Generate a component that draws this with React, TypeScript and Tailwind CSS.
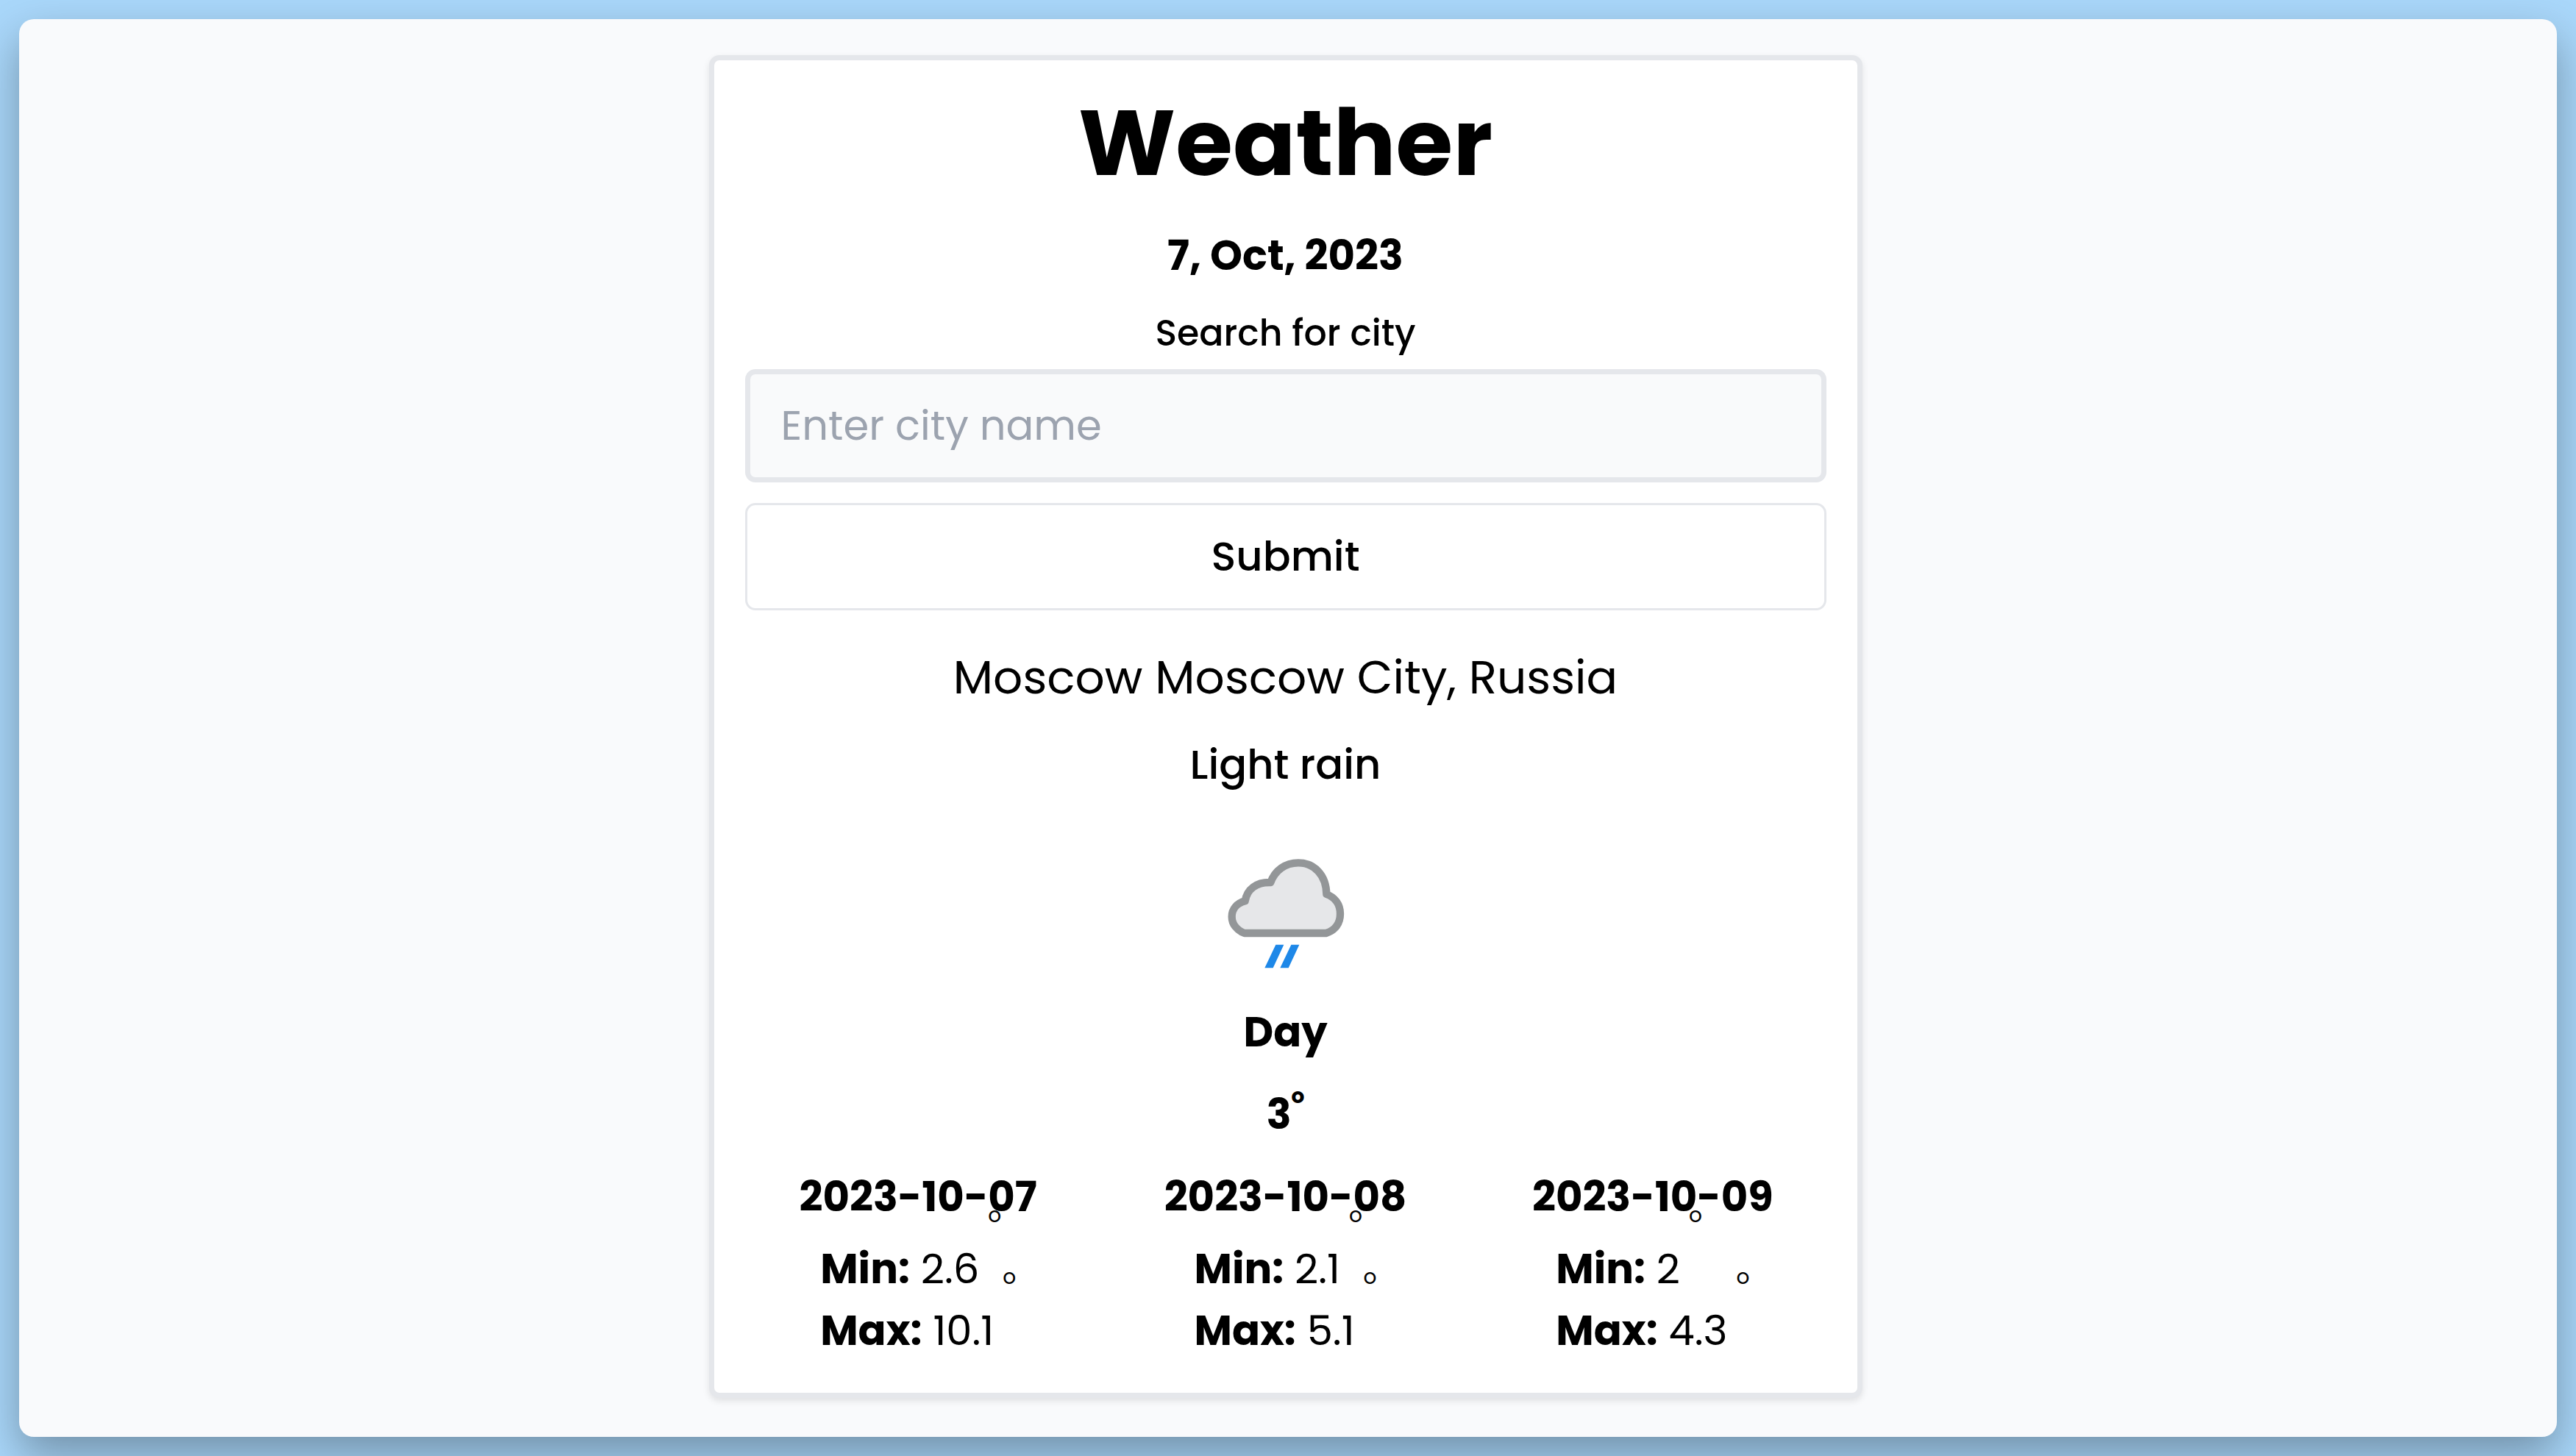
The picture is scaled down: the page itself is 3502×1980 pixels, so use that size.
import React from "react";

type Forecast = { date: string; min: string; max: string };

const forecast: Forecast[] = [
  { date: "2023-10-07", min: "2.6", max: "10.1" },
  { date: "2023-10-08", min: "2.1", max: "5.1" },
  { date: "2023-10-09", min: "2", max: "4.3" },
];

function RainIcon() {
  return (
    <svg className="size-[224px]" viewBox="48 -60 672 672" role="img" aria-label="Light rain">
      <path
        d="M215 417 C185 406 164 380 164 350 C164 318 185 295 218 286 C226 238 264 208 322 210 C340 160 382 130 435 130 C500 130 549 180 550 258 C585 271 606 300 606 338 C606 378 585 405 548 417 Z"
        fill="#e6e7e9"
        stroke="#939698"
        strokeWidth="31"
        strokeLinejoin="round"
      />
      <path d="M343 464 H376 L332 559 H298 Z M406 464 H439 L395 559 H361 Z" fill="#1e88e8" />
    </svg>
  );
}

function RaisedDegree() {
  return <span className="relative -top-[83px] ml-3 text-[28px] leading-none">o</span>;
}

function DayForecast({ date, min, max }: Forecast) {
  return (
    <div className="flex flex-col items-center gap-3.5">
      <h3 className="font-bold">{date}</h3>
      <div>
        <p>
          <span className="font-bold">Min:</span> {min}
          <RaisedDegree />
        </p>
        <p>
          <span className="font-bold">Max:</span> {max}
          <RaisedDegree />
        </p>
      </div>
    </div>
  );
}

export default function App() {
  return (
    <div className="min-h-screen bg-[#a9d7fa] p-[26px] font-['Poppins','Inter',sans-serif] text-black">
      <div className="flex min-h-[calc(100vh-52px)] flex-col items-center rounded-[20px] bg-[#f9fafc] py-[49px] pr-[7px] shadow-[0_26px_60px_rgba(0,0,0,0.32)]">
        <main className="flex w-full max-w-[1568px] flex-col items-center rounded-[14px] border-[7px] border-gray-200 bg-white p-[42px] text-center text-[56px] leading-[84px] shadow-[0_4px_10px_rgba(0,0,0,0.1)]">
          <h1 className="text-[126px] leading-[140px] font-bold">Weather</h1>
          <h2 className="mt-[42px] font-bold">7, Oct, 2023</h2>
          <form className="mt-7 flex w-full flex-col" onSubmit={(e) => e.preventDefault()}>
            <label htmlFor="city" className="text-[49px] leading-[70px] font-medium">
              Search for city
            </label>
            <input
              id="city"
              type="text"
              placeholder="Enter city name"
              className="mt-3.5 w-full rounded-[14px] border-[7px] border-gray-200 bg-gray-50 px-[42px] py-7 placeholder:text-[#9ca3af]"
            />
            <button type="submit" className="mt-7 w-full rounded-[14px] border-[3px] border-gray-200 bg-white py-7 font-medium">
              Submit
            </button>
          </form>
          <p className="mt-[42px] text-[63px] leading-[98px]">Moscow Moscow City, Russia</p>
          <p className="mt-7 font-medium">Light rain</p>
          <div className="mt-7">
            <RainIcon />
          </div>
          <p className="mt-7 font-bold">Day</p>
          <p className="mt-7 font-bold">
            3<span className="relative -top-[35px] text-[28px] leading-none">o</span>
          </p>
          <section className="mt-7 grid w-full grid-cols-3 gap-7 text-left">
            {forecast.map((day) => (
              <DayForecast key={day.date} {...day} />
            ))}
          </section>
        </main>
      </div>
    </div>
  );
}
